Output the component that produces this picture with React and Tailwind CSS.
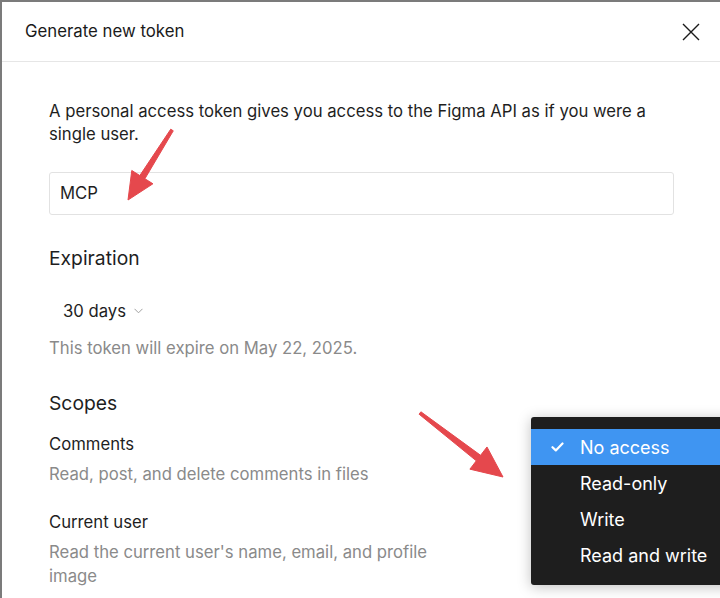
import { useMemo } from 'react';

const font = { fontFamily: 'Inter, "Noto Sans", sans-serif' };

// tapered arrow: thin tail, triangular head
function arrowPoints(tail, tip, headLen, headW, tailW, neckW) {
  const dx = tip[0] - tail[0];
  const dy = tip[1] - tail[1];
  const len = Math.hypot(dx, dy);
  const ux = dx / len;
  const uy = dy / len;
  const px = -uy;
  const py = ux;
  const bx = tip[0] - ux * headLen;
  const by = tip[1] - uy * headLen;
  const pts = [
    [tail[0] + px * tailW / 2, tail[1] + py * tailW / 2],
    [bx + px * neckW / 2, by + py * neckW / 2],
    [bx + px * headW / 2, by + py * headW / 2],
    tip,
    [bx - px * headW / 2, by - py * headW / 2],
    [bx - px * neckW / 2, by - py * neckW / 2],
    [tail[0] - px * tailW / 2, tail[1] - py * tailW / 2],
  ];
  return pts.map((p) => p.join(',')).join(' ');
}

function Arrows() {
  const a1 = useMemo(() => arrowPoints([172, 130], [128, 200], 27, 25, 3, 6), []);
  const a2 = useMemo(() => arrowPoints([420, 413], [503, 477], 31, 28, 3, 7), []);
  return (
    <svg className="absolute left-0 top-0 pointer-events-none" width="720" height="598">
      <polygon points={a1} fill="#e5484d" stroke="#e5484d" strokeWidth="1" strokeLinejoin="round" />
      <polygon points={a2} fill="#e5484d" stroke="#e5484d" strokeWidth="1" strokeLinejoin="round" />
    </svg>
  );
}

function Menu() {
  const items = ['No access', 'Read-only', 'Write', 'Read and write'];
  return (
    <div className="absolute left-[531px] top-[417px] w-[210px] bg-[#1e1e1e] rounded-[3px] py-[12px] shadow-[0_2px_14px_rgba(0,0,0,0.25)]">
      {items.map((item, i) => (
        <div
          key={item}
          className={`h-[36px] flex items-center text-white text-[18px] ${i === 0 ? 'bg-[#3f95f2]' : ''}`}
        >
          <div className="w-[49px] flex justify-center pl-[3px]">
            {i === 0 && (
              <svg width="13" height="10" viewBox="0 0 13 10">
                <path d="M1.5 5.2 L4.8 8.4 L11.5 1.5" fill="none" stroke="white" strokeWidth="2.2" strokeLinecap="round" strokeLinejoin="round" />
              </svg>
            )}
          </div>
          <span>{item}</span>
        </div>
      ))}
    </div>
  );
}

export default function App() {
  return (
    <div className="relative w-[720px] h-[598px] overflow-hidden bg-[#7b7b7b] pt-[2px] pl-[2px]" style={font}>
      <div className="w-full h-full bg-white">
        <div className="h-[60px] flex items-center justify-between pl-[23px] pr-[20px] border-b border-[#e6e6e6] text-[16.8px] text-[#1a1a1a]">
          <span>Generate new token</span>
          <svg width="18" height="18" viewBox="0 0 18 18">
            <path d="M1 1 L17 17 M17 1 L1 17" stroke="#1a1a1a" strokeWidth="1.4" fill="none" />
          </svg>
        </div>

        <div className="pl-[47px] pt-[38px] text-[#1e1e1e]">
          <p className="text-[16.7px] leading-[23px] w-[620px]">
            A personal access token gives you access to the Figma API as if you were a single user.
          </p>

          <div className="mt-[26px] w-[625px] h-[43px] border border-[#e2e2e2] rounded-[3px] flex items-center pl-[10px] text-[16.7px]">
            MCP
          </div>

          <h3 className="mt-[31px] text-[19.3px] leading-[24px]">Expiration</h3>

          <div className="mt-[29px] pl-[14px] flex items-center gap-[8px] text-[16.7px] leading-[24px]">
            <span>30 days</span>
            <svg width="9" height="6" viewBox="0 0 9 6">
              <path d="M0.5 0.8 L4.5 4.8 L8.5 0.8" fill="none" stroke="#a0a0a0" strokeWidth="1" />
            </svg>
          </div>

          <p className="mt-[13px] text-[16.7px] leading-[24px] text-[#8a8a8a]">
            This token will expire on May 22, 2025.
          </p>

          <h3 className="mt-[31px] text-[19.3px] leading-[24px]">Scopes</h3>

          <div className="mt-[17px] text-[16.7px] leading-[24px]">Comments</div>
          <div className="mt-[6px] text-[16.7px] leading-[24px] text-[#8a8a8a]">
            Read, post, and delete comments in files
          </div>

          <div className="mt-[24px] text-[16.7px] leading-[24px]">Current user</div>
          <div className="mt-[6px] text-[16.7px] leading-[24px] text-[#8a8a8a] w-[400px]">
            Read the current user's name, email, and profile image
          </div>
        </div>
      </div>

      <Arrows />
      <Menu />
    </div>
  );
}
